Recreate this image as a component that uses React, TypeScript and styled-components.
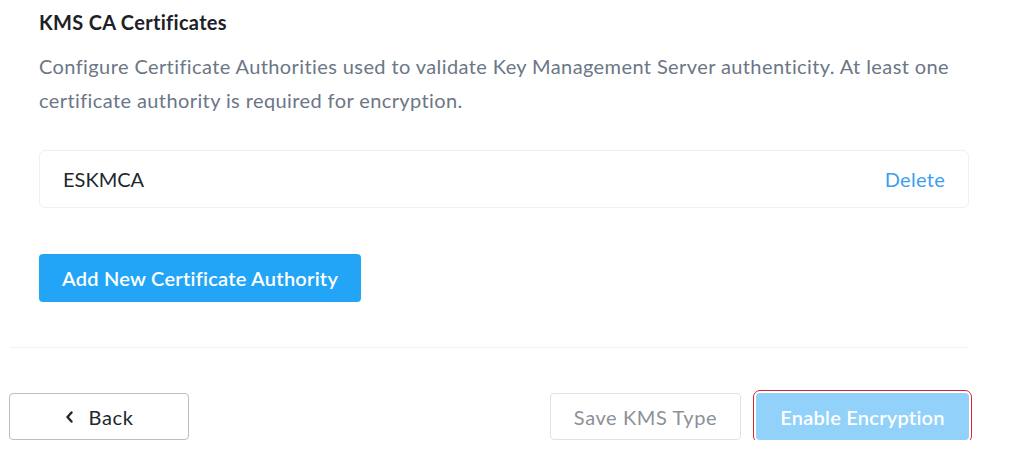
import React from "react";
import styled, { createGlobalStyle } from "styled-components";

const Global = createGlobalStyle`
  html, body { margin: 0; padding: 0; background: #ffffff; }
  body { font-family: Lato, "Open Sans", Arial, sans-serif; -webkit-font-smoothing: antialiased; letter-spacing: 0.4px; }
  * { box-sizing: border-box; }
`;

const Page = styled.div`
  width: 959px;
  margin-left: 10px;
  display: flex;
  flex-direction: column;
`;

const Section = styled.section`
  padding: 10px 0 0 29px;
  display: flex;
  flex-direction: column;
`;

const Title = styled.h3`
  margin: 0;
  font-size: 20px;
  line-height: 24px;
  font-weight: 700;
  letter-spacing: 0.3px;
  color: #1d2127;
`;

const Description = styled.p`
  margin: 15px 0 0;
  font-size: 20px;
  line-height: 34px;
  letter-spacing: 0.4px;
  color: #6b7686;
`;

const Card = styled.div`
  margin-top: 33px;
  height: 58px;
  border: 1px solid #eef0f3;
  border-radius: 6px;
  display: flex;
  align-items: center;
  justify-content: space-between;
  padding: 0 23px 0 23px;
`;

const CardName = styled.span`
  font-size: 20px;
  letter-spacing: 0;
  color: #22272e;
`;

const LinkButton = styled.button`
  border: none;
  background: none;
  padding: 0;
  font-family: inherit;
  font-size: 20px;
  letter-spacing: 0.3px;
  color: #3a9ff0;
  cursor: pointer;
`;

const PrimaryButton = styled.button<{ $disabled?: boolean; $focused?: boolean }>`
  height: 48px;
  border: none;
  border-radius: 4px;
  padding: 0 23px;
  font-family: inherit;
  font-size: 20px;
  font-weight: 600;
  letter-spacing: 0.25px;
  color: #ffffff;
  background: ${(p) => (p.$disabled ? "#91d1fa" : "#22a5f7")};
  outline: ${(p) => (p.$focused ? "1px solid #d9232e" : "none")};
  outline-offset: 2px;
  cursor: pointer;
`;

const AddRow = styled.div`
  margin-top: 46px;
  display: flex;
`;

const Divider = styled.hr`
  margin: 45px 0 0;
  border: none;
  border-top: 1px solid #f0f1f4;
  height: 0;
`;

const Footer = styled.div`
  margin-top: 45px;
  margin-left: -1px;
  display: flex;
  align-items: center;
  justify-content: space-between;
`;

const Group = styled.div`
  display: flex;
  gap: 15px;
`;

const OutlineButton = styled.button<{ $muted?: boolean; $w: number }>`
  width: ${(p) => p.$w}px;
  height: 47px;
  border-radius: 4px;
  border: 1px solid ${(p) => (p.$muted ? "#dfe2e8" : "#b9bdc9")};
  background: #ffffff;
  font-family: inherit;
  font-size: 20px;
  letter-spacing: 0.6px;
  color: ${(p) => (p.$muted ? "#8d9096" : "#22272e")};
  display: flex;
  align-items: center;
  justify-content: center;
  gap: 15px;
  cursor: pointer;
`;

const Chevron = () => (
  <svg width="9" height="12" viewBox="0 0 9 12" aria-hidden="true">
    <path d="M6.5 1.5 L2.5 6 L6.5 10.5" fill="none" stroke="#22272e" strokeWidth="2.4" strokeLinecap="round" strokeLinejoin="round" />
  </svg>
);

export default function App() {
  return (
    <>
      <Global />
      <Page>
        <Section>
          <Title>KMS CA Certificates</Title>
          <Description>
            Configure Certificate Authorities used to validate Key Management Server authenticity. At least one certificate authority is required for encryption.
          </Description>
          <Card>
            <CardName>ESKMCA</CardName>
            <LinkButton>Delete</LinkButton>
          </Card>
          <AddRow>
            <PrimaryButton>Add New Certificate Authority</PrimaryButton>
          </AddRow>
        </Section>
        <Divider />
        <Footer>
          <OutlineButton $w={180}>
            <Chevron />
            Back
          </OutlineButton>
          <Group>
            <OutlineButton $w={191} $muted>Save KMS Type</OutlineButton>
            <PrimaryButton $disabled $focused style={{ width: 213, height: 47 }}>Enable Encryption</PrimaryButton>
          </Group>
        </Footer>
      </Page>
    </>
  );
}
